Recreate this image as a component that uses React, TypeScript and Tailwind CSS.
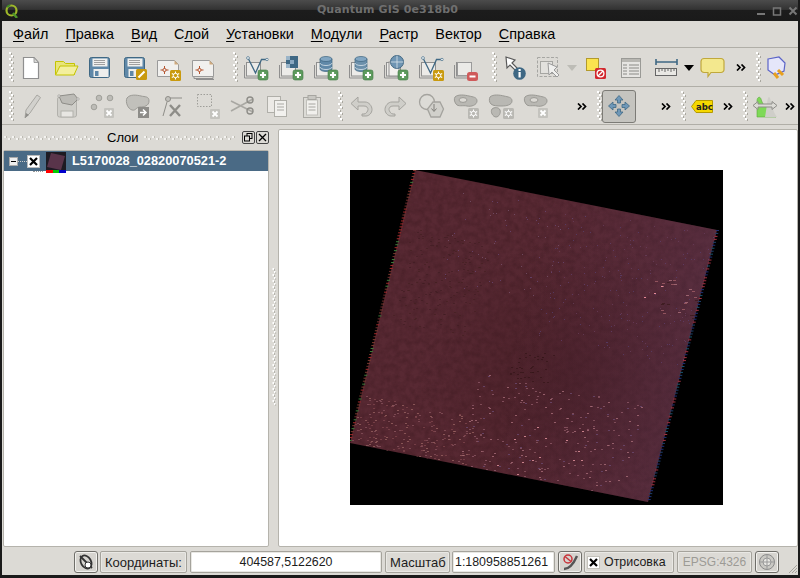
import React from "react";

const S = ({ children, w = 28, h = 28, vb }: { children: React.ReactNode; w?: number; h?: number; vb?: string }) => (
  <svg width={w} height={h} viewBox={vb ?? `0 0 ${w} ${h}`} className="block shrink-0">
    {children}
  </svg>
);

const Grip = ({ h = 31, cls = "" }: { h?: number; cls?: string }) => {
  const n = Math.floor(h / 3);
  return (
    <div className={`w-[6px] shrink-0 ${cls}`}>
      <svg width={6} height={h} className="block">
        {Array.from({ length: n }).map((_, i) => (
          <g key={i}>
            <rect x={i % 2 ? 3 : 1} y={i * 3} width={2} height={2} fill="#ffffff" />
            <rect x={i % 2 ? 5 : 3} y={i * 3 + 1} width={1} height={2} fill="#a9a79f" />
          </g>
        ))}
      </svg>
    </div>
  );
};

const HGrip = ({ w }: { w: number }) => {
  const n = Math.floor(w / 4);
  return (
    <svg width={w} height={6} className="block shrink-0">
      {Array.from({ length: n }).map((_, i) => (
        <g key={i}>
          <rect x={i * 4} y={i % 2 ? 3 : 1} width={2} height={2} fill="#f4f3f0" />
          <rect x={i * 4 + 2} y={i % 2 ? 3 : 1} width={1} height={2} fill="#bdbbb3" />
        </g>
      ))}
    </svg>
  );
};

const More = ({ cls = "" }: { cls?: string }) => (
  <div className={`w-[14px] shrink-0 flex justify-center ${cls}`}>
    <svg width={10} height={7} className="block">
      <path d="M1 0.5l3 3-3 3M5.5 0.5l3 3-3 3" fill="none" stroke="#000" strokeWidth="1.7" />
    </svg>
  </div>
);

const Plus = ({ x = 17, y = 16 }: { x?: number; y?: number }) => (
  <g transform={`translate(${x} ${y})`}>
    <rect width="10" height="10" rx="2" fill="#5d9a5d" stroke="#3f7a45" strokeWidth="0.6" />
    <path d="M5 2v6M2 5h6" stroke="#fff" strokeWidth="2.2" />
  </g>
);
const Star = ({ x = 16, y = 15, grey = false }: { x?: number; y?: number; grey?: boolean }) => (
  <g transform={`translate(${x} ${y})`}>
    <rect width="11" height="11" rx="1.5" fill={grey ? "#b9b8b3" : "#c99a0e"} />
    <path d="M5.5 1.5v8M1.8 3.4l7.4 4.2M9.2 3.4l-7.4 4.2" stroke="#fff" strokeWidth="1.1" />
    <circle cx="5.5" cy="5.5" r="2.2" fill={grey ? "#b9b8b3" : "#c99a0e"} stroke="#fff" strokeWidth="1" />
  </g>
);
const X = ({ x = 17, y = 17 }: { x?: number; y?: number }) => (
  <g transform={`translate(${x} ${y})`}>
    <rect width="10" height="10" rx="1" fill="#c4c3be" />
    <path d="M2.5 2.5l5 5M7.5 2.5l-5 5" stroke="#fff" strokeWidth="1.8" />
  </g>
);
const Layers = () => (
  <g>
    <path d="M3.5 11v13h14" fill="none" stroke="#8f8f8f" />
    <rect x="5.5" y="8.5" width="14" height="13.5" fill="#ecebe8" stroke="#8f8f8f" />
  </g>
);
const Floppy = ({ c = "#5f88a8" }: { c?: string }) => (
  <g>
    <rect x="3.5" y="3.5" width="20" height="20" rx="2" fill={c} stroke="#3f6884" />
    <rect x="6.5" y="4.5" width="15" height="8" fill="#f0f0ee" />
    <path d="M8 6.5h11M8 8.5h11M8 10.5h11" stroke="#8a8a8a" strokeWidth="0.8" />
    <rect x="7.5" y="15" width="15" height="8" fill="#eeeeec" />
    <rect x="9" y="17" width="3.5" height="5" fill="#5f88a8" />
  </g>
);
const Composer = ({ stack = false }: { stack?: boolean }) => (
  <g>
    {stack && <path d="M4 22.5v2h19v-2M6 25.5h18" fill="none" stroke="#8f8f8f" />}
    <path d="M2.5 6.5h17l4 4v12h-21z" fill="#f1f0ee" stroke="#9a9a9a" />
    <path d="M19.5 6.5v4h4z" fill="#cfa97d" />
    <path d="M9.5 12v8M5.5 16h8" stroke="#b5532e" strokeWidth="1" />
    <circle cx="9.5" cy="16" r="1.6" fill="#f1f0ee" stroke="#b5532e" />
  </g>
);
const Db = ({ cx = 14, cy = 8, c = "#5f88a8" }: { cx?: number; cy?: number; c?: string }) => (
  <g>
    <path d={`M${cx - 6} ${cy}v10a6 2.5 0 0 0 12 0v-10z`} fill={c} stroke="#3e6480" strokeWidth="0.7" />
    <ellipse cx={cx} cy={cy} rx="6" ry="2.5" fill="#82a6c2" stroke="#3e6480" strokeWidth="0.7" />
    <path d={`M${cx - 6} ${cy + 4}a6 2.5 0 0 0 12 0M${cx - 6} ${cy + 8}a6 2.5 0 0 0 12 0`} fill="none" stroke="#dbe5ec" strokeWidth="0.8" />
  </g>
);
const VLine = () => (
  <g>
    <path d="M7 4l7.5 15 6-13.5 6 0" fill="none" stroke="#3f6884" strokeWidth="1.3" />
    <circle cx="7" cy="4" r="1.4" fill="#fff" stroke="#3f6884" strokeWidth="0.7" />
    <circle cx="26" cy="5.5" r="1.2" fill="#fff" stroke="#3f6884" strokeWidth="0.7" />
  </g>
);

const I: Record<string, React.ReactNode> = {
  newf: (
    <S><path d="M6.5 3.5h10.5l4.5 5v16h-15z" fill="#fff" stroke="#8f8f8f" strokeWidth="1.2" /><path d="M17 3.5v5h4.5z" fill="#d8d8d6" stroke="#8f8f8f" strokeWidth="0.8" /></S>
  ),
  open: (
    <S><path d="M3.5 7.5h8l2 2h9v11h-19z" fill="#e8e47a" stroke="#c4c400" /><path d="M8 12h18l-4 9H3.5z" fill="#f3ef9e" stroke="#c4c400" /></S>
  ),
  save: <S><Floppy /></S>,
  saveas: (
    <S><Floppy /><rect x="15" y="15" width="11" height="11" rx="1.5" fill="#c99a0e" /><path d="M17.5 23.5l6-6" stroke="#fff" strokeWidth="2" /></S>
  ),
  comp1: <S><Composer /><Star x={15} y={16} /></S>,
  comp2: <S><Composer stack /></S>,
  addv: <S><Layers /><VLine /><Plus /></S>,
  addr: (
    <S><Layers /><rect x="10" y="2" width="12" height="12" fill="#3f6884" /><rect x="10" y="2" width="4" height="4" fill="#9ab4c8" /><rect x="14" y="6" width="4" height="4" fill="#8aa8c0" /><rect x="10" y="10" width="4" height="4" fill="#9ab4c8" /><Plus /></S>
  ),
  addp: <S><Layers /><Db cx={15} cy={5} /><Plus /></S>,
  adds: <S><Layers /><Db cx={15} cy={5} c="#6b90ab" /><Plus /></S>,
  addw: (
    <S><Layers /><rect x="8" y="8" width="10" height="14" fill="#f2f1ee" stroke="#8f8f8f" /><circle cx="16" cy="8" r="6.5" fill="#6f95b3" stroke="#3e6480" /><path d="M9.5 8h13M16 1.5v13" stroke="#d9e3ea" strokeWidth="0.8" /><Plus /></S>
  ),
  newv: <S><Layers /><VLine /><Star x={17} y={16} /></S>,
  rem: (
    <S><Layers /><rect x="6.5" y="8.5" width="14" height="13" fill="#ebeae7" stroke="#9a9a9a" /><rect x="16" y="18" width="11" height="9" rx="2.5" fill="#cf5a5a" /><path d="M18.5 22.5h6" stroke="#fff" strokeWidth="2" /></S>
  ),
  info: (
    <S><path d="M6 3l1 11 3-3 6 6 2-2-6-6 3-3z" fill="#fff" stroke="#5a5a5a" strokeWidth="1.2" /><circle cx="19.5" cy="19.5" r="6.3" fill="#3f6884" /><rect x="18.5" y="18" width="2.2" height="5.5" fill="#fff" /><rect x="18.5" y="15" width="2.2" height="2" fill="#fff" /></S>
  ),
  sel: (
    <S><rect x="3.5" y="3.5" width="20" height="19" fill="none" stroke="#a6a6a2" strokeDasharray="3 1.5" /><rect x="6.5" y="7.5" width="12" height="12" fill="#e2e1dd" stroke="#a6a6a2" /><path d="M14 9l1 12 3-3 5 5 2-2-5-5 3-3z" fill="#f0f0ee" stroke="#9a9a9a" /></S>
  ),
  stop: (
    <S><rect x="5.5" y="4.5" width="12" height="12" fill="#fbe44f" stroke="#b39a2c" /><rect x="14" y="14" width="11" height="11" rx="1.5" fill="#d2282e" /><circle cx="19.5" cy="19.5" r="3.4" fill="none" stroke="#fff" strokeWidth="1.3" /><path d="M17 22l5-5" stroke="#fff" strokeWidth="1.3" /></S>
  ),
  table: (
    <S><rect x="4.5" y="4.5" width="19" height="19" fill="#e6e5e2" stroke="#9a9a96" /><rect x="5" y="5" width="18" height="3" fill="#b8b7b2" /><path d="M6 11h4M12 11h10M6 14h4M12 14h10M6 17h4M12 17h10M6 20h4M12 20h10" stroke="#8a8a86" /></S>
  ),
  ruler: (
    <S w={24} h={28}><path d="M2 5v6M23 5v6M2 8h21" stroke="#3f6884" strokeWidth="1.6" fill="none" /><rect x="1.5" y="14.5" width="21" height="7" fill="#e9e8e4" stroke="#666" /><path d="M5 15v3M8 15v2M11 15v3M14 15v2M17 15v3M20 15v2" stroke="#666" /></S>
  ),
  tip: (
    <S><path d="M5 4.500h17a3 3 0 0 1 3 3v8a3 3 0 0 1-3 3H12l-3 4v-4H5a3 3 0 0 1-3-3v-8a3 3 0 0 1 3-3z" fill="#f3e88e" stroke="#c0a83c" strokeWidth="1.2" /></S>
  ),
  plug: (
    <S><path d="M7 5l11-2 6 6-1 8-9 4-7-5z" fill="#e5e6fa" stroke="#5b64c8" strokeWidth="1.2" /><path d="M17 16l5 5M13 19l4 5" stroke="#e8a01e" strokeWidth="3" /></S>
  ),
  pencil: (
    <S><path d="M7 26l1-8L19 3l3.500 2.500L12 21z" fill="#d2d1cd" stroke="#a8a7a2" /><path d="M7 26l1-5 3 2z" fill="#8f8e8a" /></S>
  ),
  savee: (
    <S><rect x="4.500" y="5" width="19" height="20" rx="2" fill="#cfcec9" stroke="#b2b1ac" /><rect x="8" y="19" width="12" height="6" fill="#e7e6e2" stroke="#b2b1ac" /><path d="M6 4l15-2 4 5-6 6-10-2z" fill="#bcbbb6" stroke="#8e8d88" /><circle cx="6" cy="4" r="1.2" fill="#eee" stroke="#8e8d88" strokeWidth="0.6" /><circle cx="25" cy="7" r="1.2" fill="#eee" stroke="#8e8d88" strokeWidth="0.6" /></S>
  ),
  pts: (
    <S><circle cx="11" cy="6" r="2.8" fill="#bdbcb7" stroke="#a0a09a" /><circle cx="22" cy="6" r="2.8" fill="#bdbcb7" stroke="#a0a09a" /><circle cx="6" cy="15" r="2.8" fill="#bdbcb7" stroke="#a0a09a" /><X x={16} y={16} /></S>
  ),
  blob: (
    <S><path d="M4 6c3-4 10-3 14-2s8 0 8 5-5 6-9 6-4 4-8 3-7-8-5-12z" fill="#c1c0bb" stroke="#9c9b96" /><rect x="15" y="15" width="11" height="11" fill="#8d8c88" /><path d="M17 20.500h5M20 17.500l3 3-3 3" stroke="#fff" strokeWidth="1.5" fill="none" /></S>
  ),
  tool: (
    <S><circle cx="10" cy="7" r="2.5" fill="#c2c1bc" stroke="#8e8d88" /><path d="M12 6h12M9 10L5 24" stroke="#8e8d88" fill="none" /><path d="M12 13l10 11M22 13L12 24" stroke="#8e8d88" strokeWidth="2.4" /></S>
  ),
  dash: <S><rect x="4.500" y="2.500" width="14" height="12" fill="none" stroke="#9f9e99" strokeDasharray="1.5 1.5" /><X x={17} y={17} /></S>,
  cut: (
    <S><path d="M3 9l22 11M3 19L25 7" stroke="#a9a8a3" strokeWidth="1.6" fill="none" /><circle cx="22" cy="8" r="3" fill="none" stroke="#8e8d88" strokeWidth="1.4" /><circle cx="22" cy="19" r="3" fill="none" stroke="#8e8d88" strokeWidth="1.4" /></S>
  ),
  copy: (
    <S><rect x="4.500" y="4.500" width="13" height="16" fill="#eceae6" stroke="#b0afa9" /><rect x="11.500" y="8.500" width="12" height="16" fill="#f2f1ee" stroke="#b0afa9" /><path d="M14 12h7M14 15h7M14 18h7" stroke="#a9a8a3" /></S>
  ),
  paste: (
    <S><rect x="5.500" y="5.500" width="17" height="20" fill="#dcdbd6" stroke="#aaa9a4" /><rect x="8.500" y="8" width="11" height="15" fill="#f1f0ed" stroke="#c0bfba" /><rect x="10" y="3.500" width="8" height="4" fill="#c8c7c2" stroke="#a6a5a0" /><path d="M10.500 12h7M10.500 15h7M10.500 18h7" stroke="#a6a5a0" /></S>
  ),
  undo: <S><path d="M11 5L4 11.500 11 18v-4h6c3 0 4 2 4 3.500S19 22 17 22h-2v2h4c3 0 6-3 6-6.500S22 10 18 10h-7z" fill="#cfcec9" stroke="#a4a39e" /></S>,
  redo: <S><path d="M17 5l7 6.500-7 6.500v-4h-6c-3 0-4 2-4 3.500S9 22 11 22h2v2H9c-3 0-6-3-6-6.500S6 10 10 10h7z" fill="#cfcec9" stroke="#a4a39e" /></S>,
  poly: (
    <S><circle cx="10" cy="10" r="7.500" fill="#dcdbd6" stroke="#a4a39e" strokeWidth="1.300" /><path d="M16 10l7 0 3.500 7-3.500 8h-9l-3.500-8z" fill="#d1d0cb" stroke="#a4a39e" strokeWidth="1.300" /><path d="M17 12v7M14.500 16.500l2.500 3 2.500-3" fill="none" stroke="#807f7a" /></S>
  ),
  ring: (
    <S><path d="M3 5c3-3 10-2 14-1s8 1 8 5-6 6-10 5-9 1-11-2-2-5-1-7z" fill="#b9b8b3" stroke="#9a9994" /><ellipse cx="11" cy="8" rx="4" ry="2.400" fill="#dcdad5" stroke="#9a9994" /><Star x={16} y={16} grey /></S>
  ),
  split: (
    <S><path d="M3 5c3-3 10-2 14-1s8 1 8 5-6 5-10 5-9 0-11-2-2-5-1-7z" fill="#b9b8b3" stroke="#9a9994" /><path d="M5 17c2-2 7-2 8 1s-1 7-4 7-6-5-4-8z" fill="#b9b8b3" stroke="#9a9994" /><Star x={16} y={16} grey /></S>
  ),
  ringx: (
    <S><path d="M3 5c3-3 10-2 14-1s8 1 8 5-6 6-10 5-9 1-11-2-2-5-1-7z" fill="#b9b8b3" stroke="#9a9994" /><ellipse cx="12" cy="8" rx="4" ry="2.400" fill="#dcdad5" stroke="#9a9994" /><X x={16} y={16} /></S>
  ),
  pan: (
    <S vb="0 0 24 24" w={24} h={24}><path d="M12 1.500l4 4.500h-2.500v3h-3v-3H8zM12 22.500l-4-4.500h2.500v-3h3v3H16zM1.500 12L6 8v2.500h3v3H6V16zM22.500 12L18 16v-2.500h-3v-3h3V8z" fill="#6f98b8" stroke="#3f6884" strokeWidth="0.800" /></S>
  ),
  abc: (
    <S w={22} h={13}><path d="M5 0.500h16.500v12H5L0.500 6.500z" fill="#f6d800" stroke="#b59a00" /><text x="5" y="10" fontSize="8.500" fontWeight="700" fill="#222" fontFamily="'DejaVu Sans', sans-serif">abc</text></S>
  ),
  hist: (
    <S><path d="M6 25V9c0-4 3-5 4-2s2 6 6 9 5 7 9 9z" fill="#7ed957" stroke="#5aa83a" strokeWidth="0.600" /><path d="M14 25c2-9 2-20 4-20s2 12 8 20z" fill="#cfcec9" /><path d="M2 13.500l5-4v2.500h14V9.500l5 4-5 4V15H7v2.500z" fill="#dcdbd6" stroke="#8e8d88" /></S>
  ),
};

const C = ({ n, w = 35, cls = "" }: { n: string; w?: number; cls?: string }) => (
  <div className={`shrink-0 flex justify-center items-center ${cls}`} style={{ width: w }}>
    {I[n]}
  </div>
);
const Caret = ({ c, cls = "" }: { c: string; cls?: string }) => (
  <div className={`w-[10px] shrink-0 ${cls}`}>
    <svg width={10} height={6} className="block"><path d="M0 0h10L5 6z" fill={c} /></svg>
  </div>
);

/* seeded noise for the satellite picture */
function rng(seed: number) {
  let s = seed;
  return () => {
    s = (s * 16807) % 2147483647;
    return (s - 1) / 2147483646;
  };
}
const A = [65, 0], B = [367, 60], D = [0, 273], Cc = [298, 332];
const pt = (u: number, v: number): [number, number] => [
  A[0] + u * (B[0] - A[0]) + v * (D[0] - A[0]),
  A[1] + u * (B[1] - A[1]) + v * (D[1] - A[1]),
];

const Raster = () => {
  const r = rng(4242);
  const specks: React.ReactNode[] = [];
  const add = (k: number, u0: number, u1: number, v0: number, v1: number, cols: string[], op = 0.8, w = 1) => {
    for (let i = 0; i < k; i++) {
      const [x, y] = pt(u0 + r() * (u1 - u0), v0 + r() * (v1 - v0));
      specks.push(<rect key={specks.length} x={Math.round(x)} y={Math.round(y)} width={w} height={1} fill={cols[Math.floor(r() * cols.length)]} opacity={op} />);
    }
  };
  add(220, 0.5, 1, 0.02, 0.5, ["#6a3f5c", "#62406e", "#57406f"], 0.75);
  add(70, 0.15, 0.55, 0.03, 0.38, ["#7a5570", "#6b4a78"], 0.75);
  add(220, 0.0, 0.4, 0.82, 1, ["#7d434b", "#84505a", "#96605f"], 0.8, 2);
  add(240, 0.35, 0.9, 0.66, 1, ["#8a5560", "#8d5866", "#a86d78", "#6c4a70"], 0.8, 2);
  add(14, 0.45, 0.75, 0.78, 1, ["#c9808a"], 1, 2);
  add(26, 0.83, 1, 0.2, 0.33, ["#9c5a64", "#a86d78", "#3c1b1e"], 0.85, 3);
  add(4, 0.8, 0.88, 0.22, 0.3, ["#e58a96"], 1, 2);
  add(160, 0.03, 0.3, 0.2, 0.55, ["#3f1d22", "#43201f"], 0.6, 2);
  add(40, 0.45, 0.58, 0.55, 0.66, ["#351518"], 0.7, 2);
  const edge: React.ReactNode[] = [];
  const le = ["#a22a2a", "#7d3a30", "#6d2c2c", "#3d7a3a"];
  const re = ["#1d3f6b", "#17506a", "#1d2f70", "#a03040"];
  for (let i = 0; i < 92; i++) {
    const t = i / 92;
    const lx = A[0] + t * (D[0] - A[0]);
    const ly = A[1] + t * (D[1] - A[1]);
    edge.push(<rect key={`l${i}`} x={lx - 2} y={ly} width={3} height={1} fill={le[Math.floor(r() * 4)]} />);
    const rx = B[0] + t * (Cc[0] - B[0]);
    const ry = B[1] + t * (Cc[1] - B[1]);
    edge.push(<rect key={`r${i}`} x={rx - 1} y={ry} width={3} height={1} fill={re[Math.floor(r() * 4)]} />);
  }
  return (
    <svg width={373} height={335} className="block bg-black">
      <defs>
        <radialGradient id="mid" cx="0.6" cy="0.62" r="0.42">
          <stop offset="0" stopColor="#3c181e" stopOpacity="0.5" />
          <stop offset="1" stopColor="#3c181e" stopOpacity="0" />
        </radialGradient>
        <linearGradient id="tint" x1="0" y1="0" x2="1" y2="0.15">
          <stop offset="0.5" stopColor="#583050" stopOpacity="0" />
          <stop offset="1" stopColor="#583a5c" stopOpacity="0.3" />
        </linearGradient>
        <filter id="mott" x="0" y="0" width="100%" height="100%" colorInterpolationFilters="sRGB">
          <feTurbulence type="fractalNoise" baseFrequency="0.16" numOctaves="4" seed="5" />
          <feColorMatrix values="0 0 0 0 0.2  0 0 0 0 0.08  0 0 0 0 0.1  1.8 0 0 0 -0.6" />
        </filter>
        <clipPath id="cl"><polygon points="65,0 367,60 298,332 0,273" /></clipPath>
      </defs>
      <polygon points="65,0 367,60 298,332 0,273" fill="#582933" />
      <g clipPath="url(#cl)">
        <rect width="373" height="335" filter="url(#mott)" opacity="0.35" />
        <rect width="373" height="335" fill="url(#mid)" />
        <rect width="373" height="335" fill="url(#tint)" />
        {specks}
      </g>
      {edge}
    </svg>
  );
};

const Frame = ({ children, cls = "" }: { children?: React.ReactNode; cls?: string }) => (
  <div className={`h-[22px] shrink-0 flex items-center border border-[#a5a39c] rounded-[2px] shadow-[inset_0_0_0_1px_#e9e8e4] ${cls}`}>{children}</div>
);
const SBtn = ({ children, cls = "" }: { children: React.ReactNode; cls?: string }) => (
  <div className={`h-[22px] w-[24px] shrink-0 flex items-center justify-center border border-[#6f6e69] rounded-[3px] bg-[#d6d4cf] shadow-[inset_0_0_0_1px_#f2f1ee] ${cls}`}>{children}</div>
);

const menu: [string, string, string][] = [
  ["", "Ф", "айл"], ["", "П", "равка"], ["", "В", "ид"], ["С", "л", "ой"], ["", "У", "становки"],
  ["", "М", "одули"], ["", "Р", "астр"], ["Век", "т", "ор"], ["", "С", "правка"],
];

export default function App() {
  return (
    <div className="w-[800px] h-[578px] overflow-hidden flex flex-col bg-[#dcdad5] border-l-[2px] border-r-[2px] border-b-[3px] border-[#1a1a1a] text-black font-['Liberation_Sans',sans-serif]">
      {/* title bar */}
      <div className="-mx-[2px] h-[21px] shrink-0 flex items-center bg-[linear-gradient(#4c4c4c_0%,#333_45%,#1c1c1c_48%,#1a1a1a_100%)]">
        <div className="w-[14px] h-[14px] ml-[5px] shrink-0">
          <svg width={14} height={14} className="block">
            <circle cx="6.500" cy="6.500" r="5" fill="none" stroke="#9fb82a" strokeWidth="2.200" />
            <path d="M8 9l4 5" stroke="#4f9428" strokeWidth="2.400" />
            <path d="M2 3l3-2" stroke="#3f8a28" strokeWidth="2" />
          </svg>
        </div>
        <div className="flex-1 text-center text-[11px] font-bold tracking-[0.1px] text-[#6f6f6f] font-['DejaVu_Sans',sans-serif]">Quantum GIS 0e318b0</div>
        <div className="flex items-center gap-[6px] pr-[2px]">
          <svg width={10} height={10}><rect x="1" y="7" width="8" height="2" fill="#777" /></svg>
          <svg width={10} height={10}><rect x="1.500" y="2" width="7" height="7" fill="none" stroke="#777" strokeWidth="1.500" /></svg>
          <svg width={10} height={10}><path d="M1.500 1.500l7 7M8.500 1.500l-7 7" stroke="#777" strokeWidth="2" /></svg>
        </div>
      </div>

      {/* menu */}
      <div className="h-[27px] shrink-0 flex items-center gap-[17px] pl-[11px] text-[14.4px] leading-none border-b border-[#b0aea7]">
        {menu.map(([a, u, b]) => (
          <span key={a + u + b} className="whitespace-pre">
            {a}
            <span className="underline underline-offset-[2px]">{u}</span>
            {b}
          </span>
        ))}
      </div>

      {/* toolbar 1 */}
      <div className="h-[39px] shrink-0 flex items-center pl-[6px] pt-[1px] border-b border-[#b0aea7]">
        <Grip />
        <C n="newf" w={34.5} /><C n="open" w={34.5} /><C n="save" w={34.5} /><C n="saveas" w={34.5} /><C n="comp1" w={34.5} /><C n="comp2" w={34.5} />
        <Grip cls="ml-[10.5px]" />
        <C n="addv" /><C n="addr" /><C n="addp" /><C n="adds" /><C n="addw" /><C n="newv" /><C n="rem" />
        <Grip cls="ml-[8px]" />
        <C n="info" w={34} /><C n="sel" w={35} />
        <Caret c="#bdbcb6" cls="ml-[1px]" />
        <C n="stop" w={34} cls="ml-[1px]" /><C n="table" w={34} cls="ml-[2px]" />
        <C n="ruler" w={30} cls="ml-[3px]" />
        <Caret c="#000" cls="ml-[3px]" />
        <C n="tip" w={30} cls="ml-[4px]" />
        <More cls="ml-[6px]" />
        <Grip cls="ml-[7px]" />
        <C n="plug" w={28} />
      </div>

      {/* toolbar 2 */}
      <div className="h-[38px] shrink-0 flex items-center pl-[6px] pt-[1px] border-b border-[#b0aea7]">
        <Grip />
        <C n="pencil" /><C n="savee" /><C n="pts" /><C n="blob" /><C n="tool" /><C n="dash" /><C n="cut" /><C n="copy" /><C n="paste" />
        <Grip cls="ml-[8px]" />
        <C n="undo" /><C n="redo" /><C n="poly" /><C n="ring" /><C n="split" /><C n="ringx" />
        <More cls="ml-[22px]" />
        <Grip cls="ml-[7px]" />
        <div className="w-[34px] h-[33px] shrink-0 flex items-center justify-center bg-[#c5c4bf] border border-[#7c7b76] rounded-[3px]">{I.pan}</div>
        <More cls="ml-[23px]" />
        <Grip cls="ml-[7px]" />
        <C n="abc" w={32} />
        <More cls="ml-[3px]" />
        <Grip cls="ml-[7px]" />
        <C n="hist" w={34} />
        <More cls="ml-[1px]" />
      </div>

      {/* main */}
      <div className="flex-1 min-h-0 flex">
        <div className="w-[267px] shrink-0 flex flex-col pl-[1px]">
          <div className="h-[25px] shrink-0 flex items-center pl-[1px]">
            <HGrip w={97} />
            <span className="ml-[6px] w-[31px] text-[13px] leading-none">Слои</span>
            <span className="ml-[6px]"><HGrip w={94} /></span>
            <div className="ml-[4px] w-[13px] h-[13px] border border-[#444] rounded-[2px] flex items-center justify-center">
              <svg width={9} height={9}><rect x="3" y="0.500" width="5" height="5" fill="none" stroke="#000" /><rect x="0.500" y="3" width="5" height="5" fill="#dcdad5" stroke="#000" /></svg>
            </div>
            <div className="ml-[1px] w-[13px] h-[13px] border border-[#444] rounded-[2px] flex items-center justify-center">
              <svg width={9} height={9}><path d="M1 1l7 7M8 1l-7 7" stroke="#000" strokeWidth="1.300" /></svg>
            </div>
          </div>
          <div className="flex-1 bg-white border border-[#b5b3ac] rounded-[2px]">
            <div className="h-[20px] bg-[#4a6a85] flex items-center relative">
              <div className="ml-[5px] w-[9px] h-[9px] bg-[#eee] border border-[#aaa] flex items-center justify-center shrink-0">
                <div className="w-[5px] h-[1px] bg-black" />
              </div>
              <div className="w-[9px] shrink-0 border-t border-dotted border-[#ccc]" />
              <div className="w-[13px] h-[13px] bg-white border border-[#bbb] flex items-center justify-center shrink-0">
                <svg width={9} height={9}><path d="M1 1l7 7M8 1l-7 7" stroke="#000" strokeWidth="2.200" /></svg>
              </div>
              <div className="ml-[6px] w-[20px] h-[19px] bg-[#1d1a22] shrink-0 flex items-center justify-center">
                <svg width={20} height={19}><polygon points="5,1 19,4 15,18 1,15" fill="#59344a" /></svg>
              </div>
              <span className="ml-[6px] text-[12.8px] font-bold text-white whitespace-nowrap">L5170028_02820070521-2</span>
            </div>
            <div className="ml-[29px] flex items-center h-[3px] -mt-[1px] relative">
              <div className="w-[10px] border-t border-dotted border-[#999]" />
              <div className="ml-[3px] w-[7px] h-[3px] bg-[#f00]" />
              <div className="w-[6px] h-[3px] bg-[#0c0]" />
              <div className="w-[7px] h-[3px] bg-[#00c]" />
            </div>
          </div>
        </div>
        <div className="w-[9px] shrink-0 flex items-center justify-center mt-[2px]">
          <Grip h={138} cls="scale-x-75" />
        </div>
        <div className="flex-1 bg-white border border-[#b5b3ac] rounded-[2px] mt-[4px] pl-[71px] pt-[40px] min-w-0">
          <Raster />
        </div>
      </div>

      {/* status bar */}
      <div className="h-[28px] shrink-0 flex items-end pb-[2px] pl-[72px] text-[12.4px] leading-none text-[#1c1c1c] relative">
        <SBtn>
          <svg width={18} height={18}><ellipse cx="9" cy="9" rx="5" ry="7" fill="none" stroke="#333" strokeWidth="1.800" transform="rotate(-30 9 9)" /><path d="M3 3l12 12" stroke="#333" strokeWidth="1.800" /><circle cx="11" cy="12" r="3" fill="#fff" stroke="#333" /></svg>
        </SBtn>
        <Frame cls="ml-[2px] w-[87px] pl-[4px] text-[13px]">Координаты:</Frame>
        <Frame cls="ml-[3px] w-[192px] bg-white justify-center">404587,5122620</Frame>
        <Frame cls="ml-[3px] w-[65px] pl-[4px] text-[13px]">Масштаб</Frame>
        <Frame cls="ml-[2px] w-[103px] bg-white pl-[2px]">1:180958851261</Frame>
        <SBtn cls="ml-[3px]">
          <svg width={20} height={20}><circle cx="8" cy="7" r="4" fill="none" stroke="#c8343a" strokeWidth="1.500" /><path d="M5 4.500l6 5" stroke="#c8343a" strokeWidth="1.500" /><path d="M4 17c5 0 9-4 13-13" fill="none" stroke="#555" strokeWidth="2.400" /></svg>
        </SBtn>
        <Frame cls="ml-[2px] w-[90px] pl-[2px] gap-[4px]">
          <span className="w-[13px] h-[13px] bg-white border border-[#c4c2bb] flex items-center justify-center shrink-0">
            <svg width={9} height={9}><path d="M1 1l7 7M8 1l-7 7" stroke="#000" strokeWidth="2.200" /></svg>
          </span>
          Отрисовка
        </Frame>
        <Frame cls="ml-[3px] w-[75px] justify-center text-[#9c9b95] text-[12px]">EPSG:4326</Frame>
        <SBtn cls="ml-[3px]">
          <svg width={18} height={18}><circle cx="9" cy="9" r="7.500" fill="#c9c8c3" stroke="#888" /><circle cx="9" cy="9" r="4" fill="#e8e7e3" stroke="#999" /><path d="M9 1v16M1 9h16" stroke="#999" strokeWidth="1" /></svg>
        </SBtn>
        <svg width={12} height={12} className="absolute right-0 bottom-[1px]"><path d="M11 3l-8 8M11 6l-5 5M11 9l-2 2" stroke="#a5a39c" /></svg>
      </div>
    </div>
  );
}
